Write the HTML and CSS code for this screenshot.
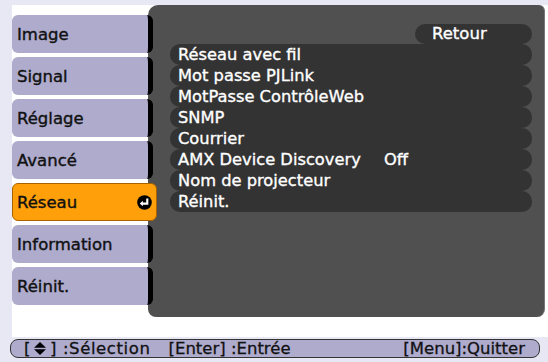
FILE: index.html
```html
<!DOCTYPE html>
<html lang="fr">
<head>
  <meta charset="UTF-8" />
  <title>Réseau</title>
  <link rel="stylesheet" href="styles.css">
</head>
<body>

  <div class="ecran">
    <div class="principal">
      <ul class="onglets">
        <li class="onglet">Image</li>
        <li class="onglet">Signal</li>
        <li class="onglet">Réglage</li>
        <li class="onglet">Avancé</li>
        <li class="onglet actif">Réseau
          <svg class="entree" width="15" height="15" viewBox="0 0 14 14">
            <circle cx="7" cy="7" r="6.8" fill="#000"/>
            <path d="M9.6 3.2 V8 H4.6" fill="none" stroke="#fff" stroke-width="2"/>
            <path d="M2.6 8 L5.4 5.4 L5.4 10.6 Z" fill="#fff"/>
          </svg>
        </li>
        <li class="onglet">Information</li>
        <li class="onglet">Réinit.</li>
      </ul>

      <div class="panneau">
        <div class="entete">
          <span class="retour">Retour</span>
        </div>
        <ul class="lignes">
          <li class="ligne">Réseau avec fil</li>
          <li class="ligne">Mot passe PJLink</li>
          <li class="ligne">MotPasse ContrôleWeb</li>
          <li class="ligne">SNMP</li>
          <li class="ligne">Courrier</li>
          <li class="ligne">AMX Device Discovery <span class="valeur">Off</span></li>
          <li class="ligne">Nom de projecteur</li>
          <li class="ligne">Réinit.</li>
        </ul>
      </div>
    </div>

    <div class="barre">
      <span class="aide large">[<svg class="fleches" width="12" height="13" viewBox="0 0 11 12"><path d="M5.5 0 L11 5.4 H0 Z M0 6.6 H11 L5.5 12 Z" fill="#000"/></svg>] :Sélection</span>
      <span class="aide">[Enter] :Entrée</span>
      <span class="aide droite">[Menu]:Quitter</span>
    </div>
  </div>

</body>
</html>
```

FILE: styles.css
```css
body {
  margin: 0;
  font-family: 'DejaVu Sans', sans-serif;
  background-color: #e8e8f4;
}

.ecran {
  width: 548px;
  height: 362px;
  padding-top: 5px;
  box-sizing: border-box;
}

.principal {
  display: flex;
  margin-left: 12px;
  height: 332px;
  background-color: #fff;
}

/* Onglets de gauche */
.onglets {
  list-style: none;
  margin: 0 -5px 0 0;
  padding: 10px 0 0 0;
  width: 141px;
  position: relative;
  z-index: 1;
}

.onglet {
  display: flex;
  align-items: center;
  justify-content: space-between;
  box-sizing: border-box;
  height: 38px;
  margin-bottom: 4px;
  padding-left: 5px;
  background-color: #aeabcd;
  border-right: 5px solid #000;
  border-radius: 6px;
  font-size: 16.5px;
  color: #111;
  -webkit-text-stroke: 0.4px #111;
}

.onglet.actif {
  width: 145px;
  background-color: #ffa00a;
  border: 1px solid #a86200;
  padding-left: 4px;
  padding-right: 4px;
}

.entree {
  display: block;
}

/* Panneau principal */
.panneau {
  width: 397px;
  height: 312px;
  background-color: #505050;
  border-radius: 10px 6px 8px 8px;
  border-right: 1px solid #777;
  padding: 19px 12px 0 22px;
  box-sizing: border-box;
}

.entete {
  display: flex;
  justify-content: flex-end;
}

.retour {
  width: 117px;
  height: 20px;
  line-height: 20px;
  padding-left: 17px;
  box-sizing: border-box;
  background-color: #333;
  border-radius: 10px;
  color: #fff;
  font-size: 16.5px;
  -webkit-text-stroke: 0.35px #fff;
}

.lignes {
  list-style: none;
  margin: 0;
  padding: 0;
}

.ligne {
  height: 21px;
  line-height: 21px;
  padding-left: 8px;
  background-color: #333;
  border-radius: 10px;
  color: #fff;
  font-size: 16.3px;
  white-space: pre;
  -webkit-text-stroke: 0.35px #fff;
}

.valeur {
  margin-left: 18px;
}

/* Barre d'aide */
.barre {
  display: flex;
  margin: 2px 0 0 10px;
  width: 530px;
  height: 19px;
  box-sizing: border-box;
  padding: 0 14px 0 13px;
  background-color: #aeabcd;
  border: 1px solid #333;
  border-radius: 8px;
  font-size: 16.5px;
  line-height: 17px;
  color: #111;
  -webkit-text-stroke: 0.3px #111;
}

.aide {
  margin-right: 18px;
}

.aide.large {
  letter-spacing: 0.6px;
}

.aide.droite {
  margin-left: auto;
  margin-right: 0;
}

.fleches {
  vertical-align: -1px;
  margin: 0 4px 0 3px;
}
```
